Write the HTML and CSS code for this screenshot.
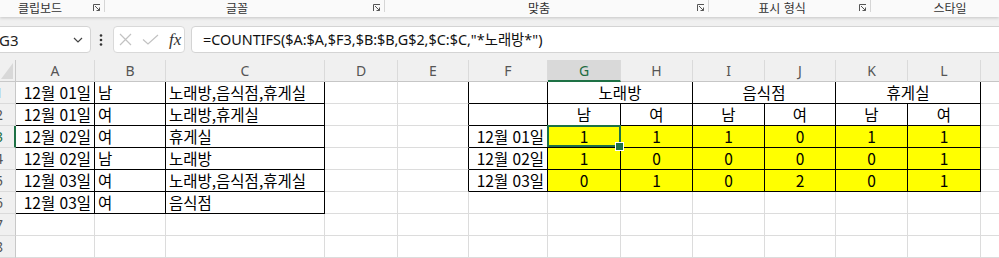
FILE: index.html
```html
<!DOCTYPE html>
<html lang="ko">
<head>
    <meta charset="UTF-8">
    <title>COUNTIFS 집계</title>
    <link rel="stylesheet" href="styles.css">
</head>
<body>

<div class="ribbon">
    <div class="group g-clip">
        <span class="label">클립보드</span>
        <span class="launcher"><svg width="8" height="8" viewBox="0 0 8 8"><path d="M0.5 7V0.5H7M2 2L6.5 6.5M6.5 3.5V6.5H3.5" fill="none" stroke="#555" stroke-width="1"/></svg></span>
    </div>
    <div class="group g-font">
        <span class="label">글꼴</span>
        <span class="launcher"><svg width="8" height="8" viewBox="0 0 8 8"><path d="M0.5 7V0.5H7M2 2L6.5 6.5M6.5 3.5V6.5H3.5" fill="none" stroke="#555" stroke-width="1"/></svg></span>
    </div>
    <div class="group g-align">
        <span class="label">맞춤</span>
        <span class="launcher"><svg width="8" height="8" viewBox="0 0 8 8"><path d="M0.5 7V0.5H7M2 2L6.5 6.5M6.5 3.5V6.5H3.5" fill="none" stroke="#555" stroke-width="1"/></svg></span>
    </div>
    <div class="group g-num">
        <span class="label">표시 형식</span>
        <span class="launcher"><svg width="8" height="8" viewBox="0 0 8 8"><path d="M0.5 7V0.5H7M2 2L6.5 6.5M6.5 3.5V6.5H3.5" fill="none" stroke="#555" stroke-width="1"/></svg></span>
    </div>
    <div class="group g-style">
        <span class="label">스타일</span>
    </div>
</div>

<div class="formula-row">
    <div class="namebox">
        <span>G3</span>
        <svg width="10" height="6" viewBox="0 0 10 6"><path d="M1 1L5 5L9 1" fill="none" stroke="#444" stroke-width="1.2"/></svg>
    </div>
    <svg class="dots" width="4" height="12" viewBox="0 0 4 12"><circle cx="2" cy="1.5" r="1.3" fill="#333"/><circle cx="2" cy="6" r="1.3" fill="#333"/><circle cx="2" cy="10.5" r="1.3" fill="#333"/></svg>
    <div class="fx-box">
        <svg width="13" height="13" viewBox="0 0 13 13"><path d="M1 1L12 12M12 1L1 12" stroke="#c2c2c2" stroke-width="1.2"/></svg>
        <svg width="17" height="11" viewBox="0 0 17 11"><path d="M1 5.5L6 10L16 1" fill="none" stroke="#c2c2c2" stroke-width="1.2"/></svg>
        <span class="fx">fx</span>
    </div>
    <div class="formula">=COUNTIFS($A:$A,$F3,$B:$B,G$2,$C:$C,"*노래방*")</div>
</div>

<div class="sheet">
    <!-- column headers -->
    <div class="corner"></div>
    <div class="hd">A</div><div class="hd">B</div><div class="hd">C</div><div class="hd">D</div>
    <div class="hd">E</div><div class="hd">F</div><div class="hd sel">G</div><div class="hd">H</div>
    <div class="hd">I</div><div class="hd">J</div><div class="hd">K</div><div class="hd">L</div><div class="hd"></div>

    <!-- row 1 -->
    <div class="rh"><span>1</span></div>
    <div class="c b r">12월 01일</div><div class="c b">남</div><div class="c b">노래방,음식점,휴게실</div>
    <div class="c"></div><div class="c edge"></div>
    <div class="c b"></div>
    <div class="c b m span2">노래방</div><div class="c b m span2">음식점</div><div class="c b m span2">휴게실</div>
    <div class="c"></div>

    <!-- row 2 -->
    <div class="rh"><span>2</span></div>
    <div class="c b r">12월 01일</div><div class="c b">여</div><div class="c b">노래방,휴게실</div>
    <div class="c"></div><div class="c edge"></div>
    <div class="c b"></div>
    <div class="c b m">남</div><div class="c b m">여</div><div class="c b m">남</div>
    <div class="c b m">여</div><div class="c b m">남</div><div class="c b m">여</div>
    <div class="c"></div>

    <!-- row 3 -->
    <div class="rh sel"><span>3</span></div>
    <div class="c b r">12월 02일</div><div class="c b">여</div><div class="c b">휴게실</div>
    <div class="c"></div><div class="c edge"></div>
    <div class="c b r">12월 01일</div>
    <div class="c b m y active">1</div><div class="c b m y">1</div><div class="c b m y">1</div>
    <div class="c b m y">0</div><div class="c b m y">1</div><div class="c b m y">1</div>
    <div class="c"></div>

    <!-- row 4 -->
    <div class="rh"><span>4</span></div>
    <div class="c b r">12월 02일</div><div class="c b">남</div><div class="c b">노래방</div>
    <div class="c"></div><div class="c edge"></div>
    <div class="c b r">12월 02일</div>
    <div class="c b m y">1</div><div class="c b m y">0</div><div class="c b m y">0</div>
    <div class="c b m y">0</div><div class="c b m y">0</div><div class="c b m y">1</div>
    <div class="c"></div>

    <!-- row 5 -->
    <div class="rh"><span>5</span></div>
    <div class="c b r">12월 03일</div><div class="c b">여</div><div class="c b">노래방,음식점,휴게실</div>
    <div class="c"></div><div class="c edge"></div>
    <div class="c b r">12월 03일</div>
    <div class="c b m y">0</div><div class="c b m y">1</div><div class="c b m y">0</div>
    <div class="c b m y">2</div><div class="c b m y">0</div><div class="c b m y">1</div>
    <div class="c"></div>

    <!-- row 6 -->
    <div class="rh"><span>6</span></div>
    <div class="c b r">12월 03일</div><div class="c b">여</div><div class="c b">음식점</div>
    <div class="c"></div><div class="c"></div><div class="c"></div><div class="c"></div><div class="c"></div>
    <div class="c"></div><div class="c"></div><div class="c"></div><div class="c"></div><div class="c"></div>

    <!-- row 7 -->
    <div class="rh"><span>7</span></div>
    <div class="c"></div><div class="c"></div><div class="c"></div><div class="c"></div><div class="c"></div><div class="c"></div>
    <div class="c"></div><div class="c"></div><div class="c"></div><div class="c"></div><div class="c"></div><div class="c"></div><div class="c"></div>

    <!-- row 8 -->
    <div class="rh"><span>8</span></div>
    <div class="c"></div><div class="c"></div><div class="c"></div><div class="c"></div><div class="c"></div><div class="c"></div>
    <div class="c"></div><div class="c"></div><div class="c"></div><div class="c"></div><div class="c"></div><div class="c"></div><div class="c"></div>
</div>

</body>
</html>
```

FILE: styles.css
```css
* {
    margin: 0;
    padding: 0;
    box-sizing: border-box;
}

html, body {
    width: 999px;
    height: 258px;
    overflow: hidden;
    background: #f0f0f0;
    font-family: "Noto Sans", "Noto Sans CJK KR", sans-serif;
}

/* ribbon group labels */
.ribbon {
    display: flex;
    height: 17px;
    background: #fafafa;
    box-shadow: 0 1px 3px rgba(0, 0, 0, 0.18);
    position: relative;
}

.group {
    display: flex;
    flex-shrink: 0;
    height: 17px;
}

.g-clip { width: 114px; margin-left: -9px; }
.g-font { width: 280px; }
.g-align { width: 324px; }
.g-num { width: 162px; }
.g-style { width: 158px; }

.label {
    flex: 1;
    text-align: center;
    font-family: "Noto Sans CJK KR", sans-serif;
    font-size: 12px;
    line-height: 15px;
    color: #333;
}

.launcher {
    width: 16px;
    height: 12px;
    display: flex;
    justify-content: flex-end;
    padding: 4px 3px 0 0;
    border-right: 1px solid #d6d6d6;
}

/* name box + formula bar */
.formula-row {
    display: flex;
    align-items: center;
    height: 43px;
    padding: 9px 0 7px;
}

.namebox {
    display: flex;
    align-items: center;
    justify-content: space-between;
    width: 103px;
    height: 27px;
    margin-left: -12px;
    padding: 0 7px 0 10px;
    background: #fff;
    border: 1px solid #d4d4d4;
    border-radius: 4px;
    font-size: 15px;
    color: #222;
}

.dots {
    margin: 0 10px 0 8px;
}

.fx-box {
    display: flex;
    align-items: center;
    gap: 10px;
    width: 72px;
    height: 27px;
    padding-left: 5px;
    background: #fff;
    border: 1px solid #d9d9d9;
    border-radius: 4px;
}

.fx {
    font-family: "Liberation Serif", serif;
    font-style: italic;
    font-size: 17px;
    color: #333;
}

.formula {
    flex: 1;
    height: 27px;
    margin-left: 6px;
    margin-right: -20px;
    padding-left: 11px;
    background: #fff;
    border: 1px solid #d4d4d4;
    border-radius: 4px;
    font-size: 14.4px;
    line-height: 25px;
    color: #111;
    white-space: nowrap;
}

/* worksheet grid */
.sheet {
    display: grid;
    grid-template-columns: 16px 79px 71px 159px 73px 71px 79px 73px 72px 72px 71px 72px 73px 30px;
    grid-auto-rows: 22px;
    background: #fff;
    font-family: "Noto Sans CJK KR", sans-serif;
    font-size: 15.5px;
    color: #000;
}

.corner {
    background: #f0f0f0;
    border-right: 1px solid #c8c8c8;
    border-bottom: 1px solid #c8c8c8;
    position: relative;
}

.corner::after {
    content: "";
    position: absolute;
    right: 2px;
    bottom: 2px;
    border-left: 12px solid transparent;
    border-bottom: 16px solid #d8d8d8;
}

.hd {
    background: #f0f0f0;
    border-right: 1px solid #dadada;
    border-bottom: 1px solid #c6c6c6;
    text-align: center;
    font-family: "Noto Sans", sans-serif;
    font-size: 14px;
    line-height: 21px;
    color: #555;
}

.hd.sel {
    background: #d9d9d9;
    border-bottom: 2px solid #1e7145;
    color: #1e6b40;
}

.rh {
    background: #f0f0f0;
    border-right: 1px solid #c8c8c8;
    border-bottom: 1px solid #dadada;
    overflow: hidden;
    font-family: "Noto Sans", sans-serif;
    font-size: 14px;
    line-height: 21px;
    color: #555;
}

.rh span {
    display: block;
    width: 30px;
    margin-left: -16px;
    text-align: center;
}

.rh.sel {
    border-right: 2px solid #1e7145;
    color: #1e7145;
}

.c {
    border-right: 1px solid #dcdcdc;
    border-bottom: 1px solid #dcdcdc;
    padding: 0 3px;
    line-height: 21px;
    white-space: nowrap;
}

.c.b {
    border-right-color: #000;
    border-bottom-color: #000;
}

.c.edge {
    border-right-color: #000;
}

.r { text-align: right; }
.m { text-align: center; }
.y { background: #ffff00; }
.span2 { grid-column: span 2; }

/* selected cell outline + fill handle */
.active {
    position: relative;
}

.active::before {
    content: "";
    position: absolute;
    left: -1px;
    top: -1px;
    right: -1px;
    bottom: 0;
    border: 2px solid #1e7145;
}

.active::after {
    content: "";
    position: absolute;
    right: -4px;
    bottom: -4px;
    width: 7px;
    height: 7px;
    background: #1e7145;
    border: 1px solid #fff;
}
```
